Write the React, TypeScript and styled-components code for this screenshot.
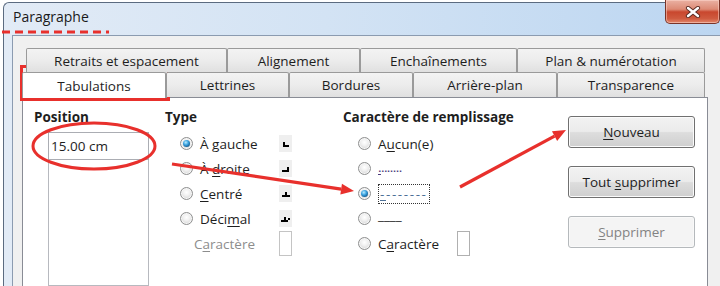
import styled, { createGlobalStyle } from "styled-components";

const GlobalStyle = createGlobalStyle`
  html, body {
    margin: 0;
    padding: 0;
    background: #ffffff;
  }
`;

const red = "#e8302c";

const Root = styled.div`
  position: relative;
  width: 720px;
  height: 286px;
  overflow: hidden;
  background: #ffffff;
  font-family: "Open Sans", "Noto Sans", sans-serif;
  font-size: 13.5px;
  color: #1e1e1e;
`;

const Window = styled.div`
  margin: 2px 0 0 3px;
  height: 284px;
  box-sizing: border-box;
  border-top: 1px solid #5b6b80;
  border-left: 1px solid #5b6b80;
  border-top-left-radius: 6px;
  padding-left: 8px;
  display: flex;
  flex-direction: column;
  background: linear-gradient(90deg, #e2ebf6 0%, #d3e3f4 45%, #bcd6f1 100%);
`;

const TitleBar = styled.div`
  height: 32px;
  display: flex;
  align-items: flex-start;
`;

const Title = styled.span`
  padding: 6px 0 0 1px;
  font-size: 14px;
  line-height: 16px;
  color: #1a1a1a;
`;

const CloseButton = styled.div`
  margin: -3px 0 0 auto;
  width: 55px;
  height: 24px;
  box-sizing: border-box;
  border: 1px solid #7a3428;
  border-top: none;
  border-radius: 0 0 5px 5px;
  background: linear-gradient(
    180deg,
    #eab1a3 0%,
    #dd8a75 40%,
    #c9472e 52%,
    #cf5a3f 80%,
    #e2866a 100%
  );
  box-shadow: inset 0 0 0 1px rgba(255, 220, 210, 0.5);
  display: flex;
  align-items: center;
  justify-content: center;
`;

const Content = styled.div`
  flex: 1;
  background: #f0f0f0;
  border-top: 1px solid #8b9bb0;
  border-left: 1px solid #8b9bb0;
  padding: 12px 0 0 9px;
  display: flex;
  flex-direction: column;
  min-height: 0;
`;

const TabRow = styled.div<{ $indent: number; $height: number }>`
  display: flex;
  margin-left: ${(p) => p.$indent}px;
  height: ${(p) => p.$height}px;
  position: relative;
  z-index: 1;
`;

const Tab = styled.div<{ $width: number; $active?: boolean }>`
  width: ${(p) => p.$width}px;
  box-sizing: border-box;
  border: 1px solid #9a9a9a;
  border-bottom: none;
  border-radius: 2px 2px 0 0;
  display: flex;
  align-items: center;
  justify-content: center;
  background: ${(p) =>
    p.$active
      ? "#ffffff"
      : "linear-gradient(180deg, #f3f3f3 0%, #ececec 50%, #e0e0e0 100%)"};
  margin-bottom: ${(p) => (p.$active ? "-1px" : "0")};
  line-height: 16px;
`;

const Pane = styled.div`
  width: 686px;
  flex: 1;
  box-sizing: border-box;
  background: #ffffff;
  border: 1px solid #898c95;
  border-bottom: none;
  padding: 11px 0 0 11px;
  display: grid;
  grid-template-columns: 131px 178px 225px 127px;
  min-height: 0;
`;

const Column = styled.div`
  display: flex;
  flex-direction: column;
  min-height: 0;
`;

const Heading = styled.div`
  font-weight: 700;
  line-height: 16px;
  height: 16px;
  white-space: nowrap;
`;

const PositionInput = styled.div`
  margin: 7px 0 0 14px;
  width: 101px;
  height: 28px;
  box-sizing: border-box;
  border: 1px solid #abadb3;
  padding: 0 2px;
  display: flex;
  align-items: center;
`;

const PositionList = styled.div`
  margin-left: 14px;
  width: 101px;
  flex: 1;
  box-sizing: border-box;
  border: 1px solid #b7b9bf;
  border-top: none;
`;

const Options = styled.div`
  margin-top: 6px;
  display: flex;
  flex-direction: column;
`;

const OptionRow = styled.div<{ $plain?: boolean }>`
  height: 25px;
  display: grid;
  grid-template-columns: ${(p) => (p.$plain ? "78px 13px" : "13px 72px 13px")};
  column-gap: 7px;
  align-items: center;
  padding-left: ${(p) => (p.$plain ? 29 : 15)}px;
  line-height: 16px;
`;

const Radio = styled.span<{ $checked?: boolean }>`
  position: relative;
  width: 13px;
  height: 13px;
  box-sizing: border-box;
  border-radius: 50%;
  border: 1px solid #8e8f8f;
  background: radial-gradient(
    circle at 50% 40%,
    #ffffff 0%,
    #f2f2f2 35%,
    #d9d9d9 75%,
    #c9c9c9 100%
  );
  box-shadow: inset 0 0 0 1px #f7f7f7;

  &::after {
    content: "";
    display: ${(p) => (p.$checked ? "block" : "none")};
    position: absolute;
    left: 2px;
    top: 2px;
    width: 7px;
    height: 7px;
    border-radius: 50%;
    background: radial-gradient(
      circle at 40% 35%,
      #b9ecff 0%,
      #3aa2e0 40%,
      #155d91 75%,
      #0c3e66 100%
    );
  }
`;

const Label = styled.span<{ $disabled?: boolean }>`
  white-space: nowrap;
  color: ${(p) => (p.$disabled ? "#8d8d8d" : "#1e1e1e")};

  u {
    text-underline-offset: 2px;
  }
`;

const TypeIcon = styled.span`
  width: 13px;
  height: 17px;
  background: #efefef;
  display: flex;
`;

const CharBox = styled.span<{ $disabled?: boolean }>`
  width: 13px;
  height: 25px;
  box-sizing: border-box;
  border: 1px solid ${(p) => (p.$disabled ? "#c4c4c4" : "#b0b0b0")};
  background: #ffffff;
`;

const Dots = styled.span`
  color: #4a3b7c;
  letter-spacing: -0.6px;
  position: relative;
  top: -2px;
`;

const FocusBox = styled.span`
  width: 52px;
  height: 20px;
  box-sizing: border-box;
  border: 1px dotted #333;
  display: flex;
  align-items: center;
  padding-left: 1px;
  color: #4c6f96;
  overflow: hidden;
  letter-spacing: 1.6px;
  white-space: nowrap;
`;

const Line = styled.span`
  position: relative;
  top: -4px;
`;

const ButtonColumn = styled.div`
  padding-top: 7px;
  display: flex;
  flex-direction: column;
  gap: 18px;
`;

const Button = styled.div<{ $disabled?: boolean }>`
  width: 127px;
  height: 32px;
  box-sizing: border-box;
  border: 1px solid ${(p) => (p.$disabled ? "#b5b9bc" : "#707070")};
  border-radius: 3px;
  display: flex;
  align-items: center;
  justify-content: center;
  color: ${(p) => (p.$disabled ? "#838383" : "#1e1e1e")};
  background: ${(p) =>
    p.$disabled
      ? "#f4f4f4"
      : "linear-gradient(180deg, #f2f2f2 0%, #ebebeb 48%, #dddddd 52%, #cfcfcf 100%)"};
  box-shadow: inset 0 0 0 1px ${(p) => (p.$disabled ? "#f9f9f9" : "#fbfbfb")};

  u {
    text-underline-offset: 2px;
  }
`;

const Overlay = styled.svg`
  position: absolute;
  left: 0;
  top: 0;
  pointer-events: none;
`;

type IconKind = "left" | "right" | "center" | "decimal";

const TabIcon = ({ kind }: { kind: IconKind }) => (
  <TypeIcon>
    <svg width="13" height="17" viewBox="0 0 13 17">
      {kind === "left" && (
        <>
          <rect x="4" y="7" width="2" height="5" fill="#000" />
          <rect x="4" y="10" width="6" height="2" fill="#000" />
        </>
      )}
      {kind === "right" && (
        <>
          <rect x="8" y="7" width="2" height="5" fill="#000" />
          <rect x="3" y="10" width="7" height="2" fill="#000" />
        </>
      )}
      {kind === "center" && (
        <>
          <rect x="6" y="7" width="2" height="5" fill="#000" />
          <rect x="3" y="10" width="8" height="2" fill="#000" />
        </>
      )}
      {kind === "decimal" && (
        <>
          <rect x="5" y="7" width="2" height="5" fill="#000" />
          <rect x="2" y="10" width="7" height="2" fill="#000" />
          <rect x="9" y="8" width="2" height="2" fill="#000" />
        </>
      )}
    </svg>
  </TypeIcon>
);

const Arrow = ({ x1, y1, x2, y2 }: { x1: number; y1: number; x2: number; y2: number }) => {
  const a = Math.atan2(y2 - y1, x2 - x1);
  const len = 13;
  const half = 5.5;
  const bx = x2 - len * Math.cos(a);
  const by = y2 - len * Math.sin(a);
  const px = -Math.sin(a) * half;
  const py = Math.cos(a) * half;
  return (
    <>
      <line x1={x1} y1={y1} x2={bx} y2={by} stroke={red} strokeWidth="3.2" />
      <polygon
        points={`${x2},${y2} ${bx + px},${by + py} ${bx - px},${by - py}`}
        fill={red}
      />
    </>
  );
};

const typeOptions: { label: React.ReactNode; icon: IconKind; checked?: boolean }[] = [
  { label: <>À <u>g</u>auche</>, icon: "left", checked: true },
  { label: <>À <u>d</u>roite</>, icon: "right" },
  { label: <><u>C</u>entré</>, icon: "center" },
  { label: <>Déci<u>m</u>al</>, icon: "decimal" },
];

export default function App() {
  return (
    <Root>
      <GlobalStyle />
      <Window>
        <TitleBar>
          <Title>Paragraphe</Title>
          <CloseButton>
            <svg width="16" height="12" viewBox="0 0 16 12">
              <path d="M3 2 L13 10 M13 2 L3 10" stroke="#5a2a22" strokeWidth="4.2" strokeLinecap="round" />
              <path d="M3 2 L13 10 M13 2 L3 10" stroke="#ffffff" strokeWidth="2.4" strokeLinecap="round" />
            </svg>
          </CloseButton>
        </TitleBar>
        <Content>
          <TabRow $indent={4} $height={24}>
            <Tab $width={201}>Retraits et espacement</Tab>
            <Tab $width={133}>Alignement</Tab>
            <Tab $width={157}>Enchaînements</Tab>
            <Tab $width={188}>Plan &amp; numérotation</Tab>
          </TabRow>
          <TabRow $indent={0} $height={25}>
            <Tab $width={144} $active>Tabulations</Tab>
            <Tab $width={123}>Lettrines</Tab>
            <Tab $width={124}>Bordures</Tab>
            <Tab $width={144}>Arrière-plan</Tab>
            <Tab $width={148}>Transparence</Tab>
          </TabRow>
          <Pane>
            <Column>
              <Heading>Position</Heading>
              <PositionInput>15.00 cm</PositionInput>
              <PositionList />
            </Column>
            <Column>
              <Heading>Type</Heading>
              <Options>
                {typeOptions.map((o, i) => (
                  <OptionRow key={i}>
                    <Radio $checked={o.checked} />
                    <Label>{o.label}</Label>
                    <TabIcon kind={o.icon} />
                  </OptionRow>
                ))}
                <OptionRow $plain>
                  <Label $disabled>
                    C<u>a</u>ractère
                  </Label>
                  <CharBox $disabled />
                </OptionRow>
              </Options>
            </Column>
            <Column>
              <Heading>Caractère de remplissage</Heading>
              <Options>
                <OptionRow>
                  <Radio />
                  <Label>
                    A<u>u</u>cun(e)
                  </Label>
                </OptionRow>
                <OptionRow>
                  <Radio />
                  <Label>
                    <Dots>
                      <u>.</u>.......
                    </Dots>
                  </Label>
                </OptionRow>
                <OptionRow>
                  <Radio $checked />
                  <FocusBox>
                    <u>-</u>-------
                  </FocusBox>
                </OptionRow>
                <OptionRow>
                  <Radio />
                  <Label>
                    <Line>____</Line>
                  </Label>
                </OptionRow>
                <OptionRow>
                  <Radio />
                  <Label>
                    C<u>a</u>ractère
                  </Label>
                  <CharBox />
                </OptionRow>
              </Options>
            </Column>
            <ButtonColumn>
              <Button>
                <span>
                  <u>N</u>ouveau
                </span>
              </Button>
              <Button>
                <span>
                  Tout <u>s</u>upprimer
                </span>
              </Button>
              <Button $disabled>
                <span>
                  <u>S</u>upprimer
                </span>
              </Button>
            </ButtonColumn>
          </Pane>
        </Content>
      </Window>
      <Overlay width="720" height="286" viewBox="0 0 720 286">
        <line x1="2" y1="32" x2="109" y2="32" stroke={red} strokeWidth="3" strokeDasharray="8 5" />
        <rect x="21.5" y="66.5" width="147" height="33" fill="none" stroke={red} strokeWidth="3" />
        <ellipse cx="94" cy="146" rx="61" ry="23" fill="none" stroke={red} strokeWidth="3" />
        <Arrow x1={172} y1={164} x2={354} y2={191} />
        <Arrow x1={460} y1={187} x2={566} y2={130} />
      </Overlay>
    </Root>
  );
}
